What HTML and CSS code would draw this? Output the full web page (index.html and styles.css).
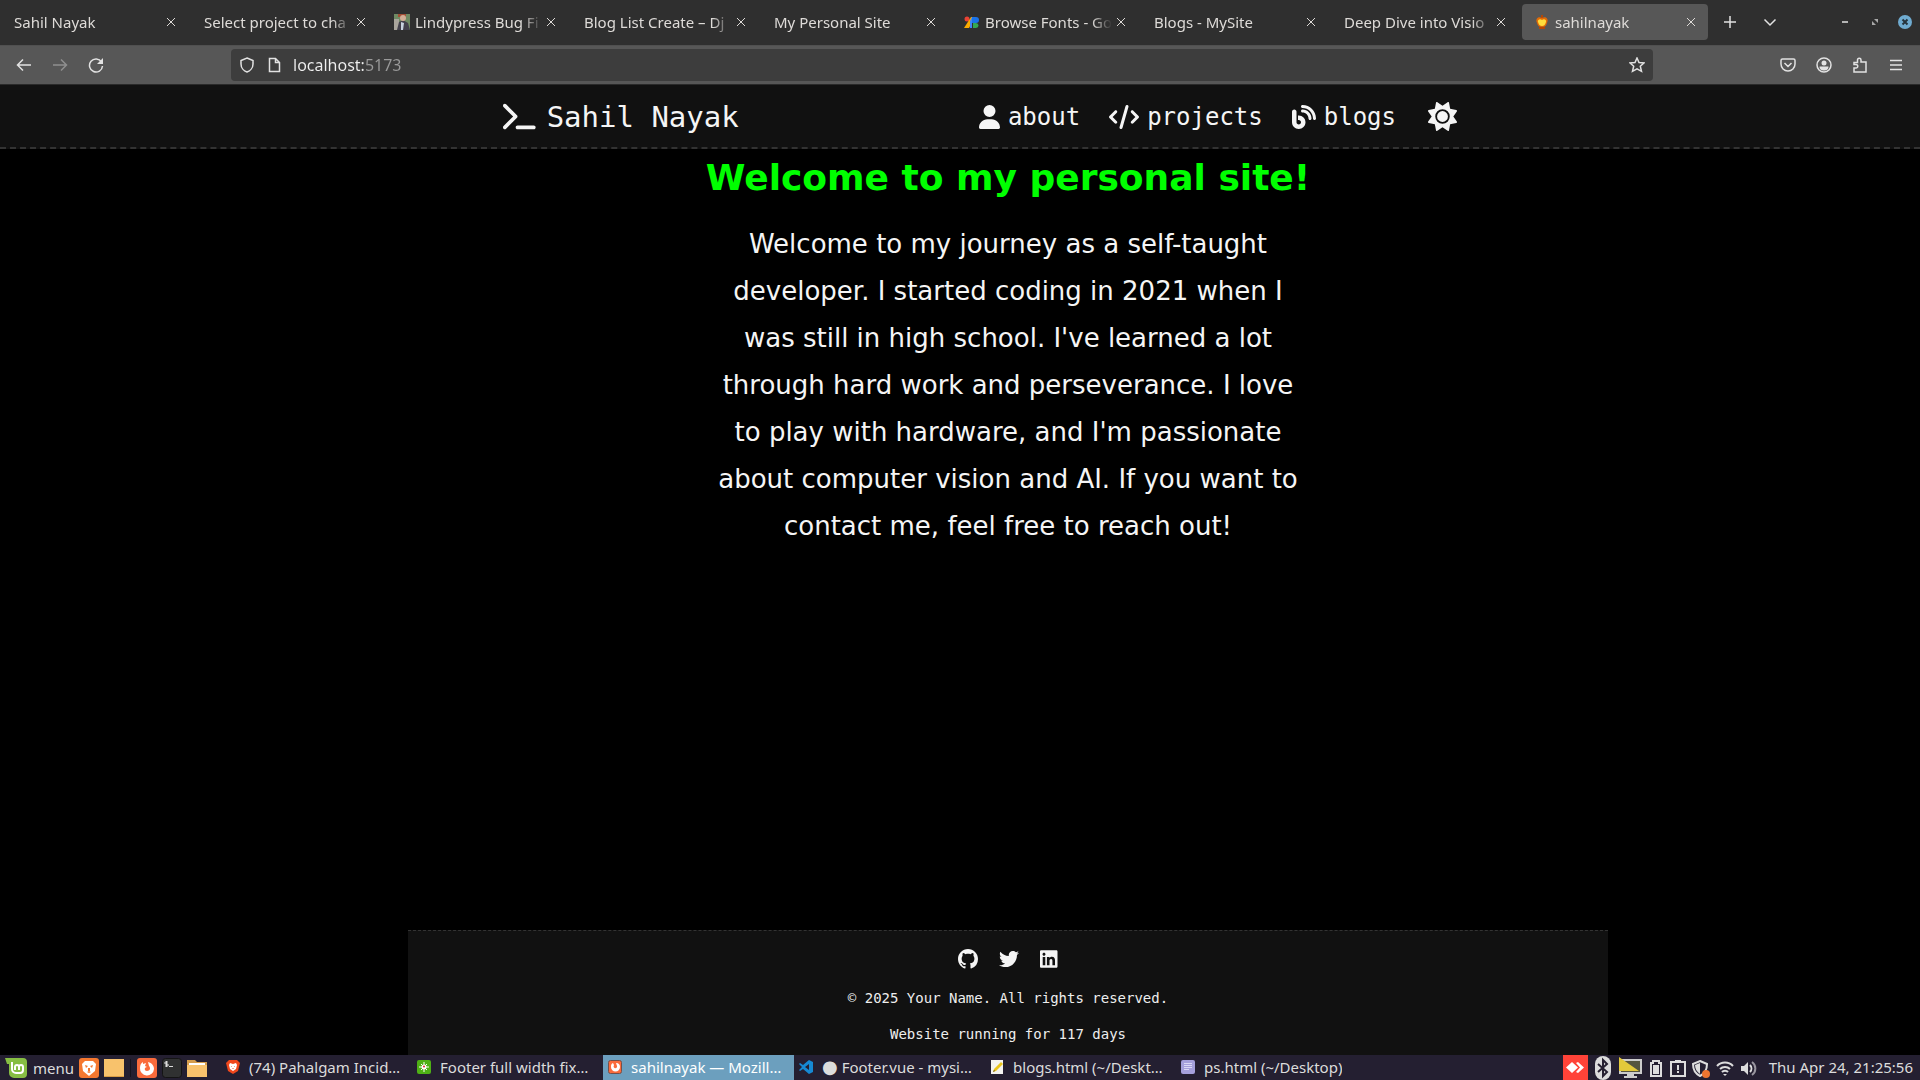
FILE: index.html
```html
<!DOCTYPE html>
<html lang="en">
<head>
<meta charset="utf-8">
<title>sahilnayak</title>
<link rel="stylesheet" href="styles.css">
</head>
<body>
<header class="browser">
  <div class="tabstrip">
    <div class="tabs">
      <div class="tab"><button class="tab-title">Sahil Nayak</button><button class="tab-close" aria-label="Close tab"><svg viewBox="0 0 10 10"><path d="M1 1l8 8M9 1L1 9"/></svg></button></div>
      <div class="tab"><button class="tab-title">Select project to cha</button><button class="tab-close" aria-label="Close tab"><svg viewBox="0 0 10 10"><path d="M1 1l8 8M9 1L1 9"/></svg></button></div>
      <div class="tab"><svg class="favicon" viewBox="0 0 16 16"><path fill="#6f8a63" d="M0 0h16v16H0z"/><path fill="#a24d35" d="M4 0h8v3H4z"/><path fill="#a9a59c" d="M0 5h5v11H0z"/><path fill="#43414c" d="M3 16l2-8 4-2 5 3 2 7z"/><circle cx="9" cy="4" r="3" fill="#d3ae96"/><path fill="#c8d2df" d="M7 8l3 1-1 7H7z"/></svg><button class="tab-title">Lindypress Bug Fi</button><button class="tab-close" aria-label="Close tab"><svg viewBox="0 0 10 10"><path d="M1 1l8 8M9 1L1 9"/></svg></button></div>
      <div class="tab"><button class="tab-title">Blog List Create – Dj</button><button class="tab-close" aria-label="Close tab"><svg viewBox="0 0 10 10"><path d="M1 1l8 8M9 1L1 9"/></svg></button></div>
      <div class="tab"><button class="tab-title">My Personal Site</button><button class="tab-close" aria-label="Close tab"><svg viewBox="0 0 10 10"><path d="M1 1l8 8M9 1L1 9"/></svg></button></div>
      <div class="tab"><svg class="favicon" viewBox="0 0 16 16"><circle cx="3" cy="5" r="2.500" fill="#ea4335"/><path fill="#fbab00" d="M7 3h4L5 14H0z"/><path fill="#1a73e8" d="M8 3h4a3 3 0 010 6H8z"/><path fill="#4285f4" d="M8 3v11H6V7z"/><path fill="#34a853" d="M9 9h3a2.500 2.500 0 010 5H9z"/></svg><button class="tab-title">Browse Fonts - Go</button><button class="tab-close" aria-label="Close tab"><svg viewBox="0 0 10 10"><path d="M1 1l8 8M9 1L1 9"/></svg></button></div>
      <div class="tab"><button class="tab-title">Blogs - MySite</button><button class="tab-close" aria-label="Close tab"><svg viewBox="0 0 10 10"><path d="M1 1l8 8M9 1L1 9"/></svg></button></div>
      <div class="tab"><button class="tab-title">Deep Dive into Visio</button><button class="tab-close" aria-label="Close tab"><svg viewBox="0 0 10 10"><path d="M1 1l8 8M9 1L1 9"/></svg></button></div>
      <div class="tab tab-active"><svg class="favicon" viewBox="0 0 16 16"><path fill="#b34708" d="M7 1h2v4H7zM5 13h6v2H5z"/><path fill="#e06a08" d="M8 4c4-2 7 1 5 5-1 3-2 4-5 4s-4-1-5-4C1 5 4 2 8 4z"/><path fill="#ffdd3c" d="M8 6c2-2 5 0 4 2-1 3-2 4-4 4s-3-1-4-4C3 6 6 4 8 6z"/></svg><button class="tab-title">sahilnayak</button><button class="tab-close" aria-label="Close tab"><svg viewBox="0 0 10 10"><path d="M1 1l8 8M9 1L1 9"/></svg></button></div>
    </div>
    <div class="tab-tools">
      <button class="icon-button" aria-label="New tab"><svg viewBox="0 0 16 16"><path d="M8 2v12M2 8h12"/></svg></button>
      <button class="icon-button" aria-label="List all tabs"><svg viewBox="0 0 16 16"><path d="M2.500 5.500L8 11l5.500-5.500"/></svg></button>
    </div>
    <div class="window-tools">
      <button class="window-button" aria-label="Minimize"><svg viewBox="0 0 14 14"><path fill="#b4b4b4" d="M4 6h6v2H4z"/></svg></button>
      <button class="window-button" aria-label="Restore"><svg viewBox="0 0 14 14"><path fill="#a8a8a8" d="M6 4h4v4zM4 6v4h4z"/></svg></button>
      <button class="window-button" aria-label="Close window"><svg viewBox="0 0 14 14"><circle cx="7" cy="7" r="7" fill="#6fabd0"/><path fill="none" stroke="#26343d" stroke-width="2" d="M4.500 4.500l5 5M9.500 4.500l-5 5"/></svg></button>
    </div>
  </div>
  <div class="toolbar">
    <div class="nav-tools">
      <button class="icon-button" aria-label="Back"><svg viewBox="0 0 16 16"><path d="M15 8H2M7 2.500L1.500 8 7 13.500"/></svg></button>
      <button class="icon-button icon-dim" aria-label="Forward"><svg viewBox="0 0 16 16"><path d="M1 8h13M9 2.500L14.500 8 9 13.500"/></svg></button>
      <button class="icon-button" aria-label="Reload"><svg viewBox="0 0 16 16"><path d="M13.500 5A6.500 6.500 0 1 0 14.500 9"/><path fill="#e2e2e2" stroke="none" d="M15 1v6H9z"/></svg></button>
    </div>
    <form class="address">
      <svg class="line-icon" viewBox="0 0 16 16"><path d="M8 1l6 2.500v3.500c0 4-3 7-6 8-3-1-6-4-6-8V3.500z"/></svg>
      <svg class="line-icon" viewBox="0 0 16 16"><path d="M3.500 1.500h6l4 4v9h-10zM9.500 1.500v4h4"/></svg>
      <input class="address-input" type="text" aria-label="Address" value="localhost:5173">
      <svg class="line-icon" viewBox="0 0 16 16"><path d="M8 1l2 4.500 5 .5-3.700 3.300 1.200 5L8 11.800l-4.500 2.500 1.200-5L1 6l5-.5z"/></svg>
    </form>
    <div class="side-tools">
      <button class="icon-button" aria-label="Save to Pocket"><svg viewBox="0 0 16 16"><path d="M2.500 2h11a1.500 1.500 0 011.500 1.500V7A7 7 0 011 7V3.500A1.500 1.500 0 012.500 2zM4.500 6L8 9.500 11.500 6"/></svg></button>
      <button class="icon-button" aria-label="Account"><svg viewBox="0 0 16 16"><circle cx="8" cy="8" r="7"/><circle cx="8" cy="6" r="2.500" fill="#e2e2e2" stroke="none"/><path fill="#e2e2e2" stroke="none" d="M3.500 9.500h9c0 3-2 4-4.500 4s-4.500-1-4.500-4z"/></svg></button>
      <button class="icon-button" aria-label="Extensions"><svg viewBox="0 0 16 16"><path d="M5.500 5.500V3a1.700 1.700 0 013.500 0v2h5v10H2v-4h2a1.700 1.700 0 000-3.500H2v-2z"/></svg></button>
      <button class="icon-button" aria-label="Menu"><svg viewBox="0 0 16 16"><path d="M2 3.500h12M2 8h12M2 12.500h12"/></svg></button>
    </div>
  </div>
</header>

<div class="page">
  <header class="site-header">
    <nav class="site-nav">
      <a class="brand" href="#"><svg class="icon-brand" viewBox="0 0 576 512"><path d="M9.400 86.600C-3.100 74.100-3.100 53.900 9.400 41.400s32.800-12.500 45.300 0l192 192c12.500 12.500 12.500 32.800 0 45.300l-192 192c-12.500 12.500-32.800 12.500-45.300 0s-12.500-32.800 0-45.300L178.700 256 9.400 86.600zM256 416H544c17.700 0 32 14.300 32 32s-14.300 32-32 32H256c-17.700 0-32-14.300-32-32s14.300-32 32-32z"/></svg>Sahil Nayak</a>
      <div class="site-links">
        <a class="site-link" href="#about"><svg class="icon-link" viewBox="0 0 448 512"><path d="M224 256A128 128 0 1 0 224 0a128 128 0 1 0 0 256zm-45.700 48C79.800 304 0 383.800 0 482.300C0 498.700 13.300 512 29.700 512H418.300c16.400 0 29.700-13.300 29.700-29.700C448 383.800 368.200 304 269.700 304H178.300z"/></svg>about</a>
        <a class="site-link" href="#projects"><svg class="icon-link" viewBox="0 0 640 512"><path d="M392.800 1.200c-17-4.900-34.700 5-39.600 22l-128 448c-4.900 17 5 34.700 22 39.600s34.700-5 39.600-22l128-448c4.900-17-5-34.700-22-39.600zm80.600 120.100c-12.500 12.500-12.500 32.800 0 45.300L562.700 256l-89.400 89.400c-12.500 12.500-12.500 32.800 0 45.300s32.800 12.500 45.300 0l112-112c12.500-12.500 12.500-32.800 0-45.300l-112-112c-12.500-12.500-32.800-12.500-45.300 0zm-306.700 0c-12.500-12.500-32.800-12.500-45.300 0l-112 112c-12.500 12.500-12.500 32.800 0 45.300l112 112c12.500 12.500 32.800 12.500 45.300 0s12.500-32.800 0-45.300L77.300 256l89.400-89.400c12.500-12.500 12.500-32.800 0-45.300z"/></svg>projects</a>
        <a class="site-link" href="#blogs"><svg class="icon-link" viewBox="0 0 512 512"><path d="M192 32c0 17.700 14.300 32 32 32c123.700 0 224 100.300 224 224c0 17.700 14.300 32 32 32s32-14.300 32-32C512 128.900 383.100 0 224 0c-17.700 0-32 14.300-32 32zm0 96c0 17.700 14.300 32 32 32c70.700 0 128 57.300 128 128c0 17.700 14.300 32 32 32s32-14.300 32-32c0-106-86-192-192-192c-17.700 0-32 14.300-32 32zM96 144c0-26.500-21.500-48-48-48S0 117.500 0 144V368c0 79.500 64.500 144 144 144s144-64.500 144-144s-64.500-144-144-144H128v96h16c26.500 0 48 21.500 48 48s-21.500 48-48 48s-48-21.500-48-48V144z"/></svg>blogs</a>
        <button class="theme-toggle" aria-label="Toggle theme"><svg class="icon-brand" viewBox="0 0 512 512"><path d="M361.500 1.200c5 2.100 8.600 6.600 9.600 11.900L391 121l107.900 19.800c5.300 1 9.800 4.600 11.900 9.600s1.500 10.700-1.600 15.200L446.900 256l62.300 90.300c3.100 4.500 3.700 10.200 1.600 15.200s-6.600 8.600-11.900 9.600L391 391 371.100 498.900c-1 5.300-4.600 9.800-9.600 11.900s-10.700 1.500-15.200-1.600L256 446.900l-90.300 62.300c-4.500 3.100-10.200 3.700-15.200 1.600s-8.600-6.600-9.600-11.900L121 391 13.100 371.100c-5.300-1-9.800-4.600-11.900-9.600s-1.500-10.700 1.600-15.200L65.100 256 2.800 165.700c-3.100-4.500-3.700-10.200-1.600-15.200s6.600-8.600 11.900-9.600L121 121 140.900 13.100c1-5.300 4.600-9.800 9.600-11.900s10.700-1.500 15.200 1.600L256 65.100 346.300 2.800c4.500-3.100 10.200-3.700 15.200-1.600zM160 256a96 96 0 1 1 192 0 96 96 0 1 1 -192 0zm224 0a128 128 0 1 0 -256 0 128 128 0 1 0 256 0z"/></svg></button>
      </div>
    </nav>
  </header>
  <main class="intro">
    <h1 class="intro-title">Welcome to my personal site!</h1>
    <p class="intro-text">Welcome to my journey as a self-taught developer. I started coding in 2021 when I was still in high school. I've learned a lot through hard work and perseverance. I love to play with hardware, and I'm passionate about computer vision and AI. If you want to contact me, feel free to reach out!</p>
  </main>
  <div class="footer-row">
  <footer class="site-footer">
    <div class="social">
      <a href="#github" aria-label="GitHub"><svg class="icon-social" viewBox="0 0 16 16"><path d="M8 0C3.580 0 0 3.580 0 8c0 3.540 2.290 6.530 5.470 7.590.4.070.55-.17.55-.38 0-.19-.01-.82-.01-1.490-2.010.37-2.530-.49-2.690-.94-.09-.23-.48-.94-.82-1.130-.28-.15-.68-.52-.01-.53.63-.01 1.080.58 1.230.82.72 1.210 1.870.87 2.330.66.070-.52.28-.87.51-1.070-1.780-.2-3.640-.89-3.640-3.950 0-.87.31-1.590.82-2.150-.08-.2-.36-1.020.08-2.120 0 0 .67-.21 2.200.82.64-.18 1.320-.27 2-.27s1.360.09 2 .27c1.530-1.040 2.200-.82 2.200-.82.44 1.100.16 1.920.08 2.120.51.56.82 1.270.82 2.150 0 3.070-1.870 3.750-3.650 3.950.29.25.54.73.54 1.480 0 1.070-.01 1.930-.01 2.200 0 .21.15.46.55.38A8.010 8.010 0 0 0 16 8c0-4.420-3.580-8-8-8z"/></svg></a>
      <a href="#twitter" aria-label="Twitter"><svg class="icon-social" viewBox="0 0 512 512"><path d="M459.370 151.716c.325 4.548.325 9.097.325 13.645 0 138.720-105.583 298.558-298.558 298.558-59.452 0-114.680-17.219-161.137-47.106 8.447.974 16.568 1.299 25.340 1.299 49.055 0 94.213-16.568 130.274-44.832-46.132-.975-84.792-31.188-98.112-72.772 6.498.974 12.995 1.624 19.818 1.624 9.421 0 18.843-1.300 27.614-3.573-48.081-9.747-84.143-51.980-84.143-102.985v-1.299c13.969 7.797 30.214 12.670 47.431 13.319-28.264-18.843-46.781-51.005-46.781-87.391 0-19.492 5.197-37.360 14.294-52.954 51.655 63.675 129.300 105.258 216.365 109.807-1.624-7.797-2.599-15.918-2.599-24.040 0-57.828 46.782-104.934 104.934-104.934 30.213 0 57.502 12.670 76.670 33.137 23.715-4.548 46.456-13.320 66.599-25.340-7.798 24.366-24.366 44.833-46.132 57.827 21.117-2.273 41.584-8.122 60.426-16.243-14.292 20.791-32.161 39.308-52.628 54.253z"/></svg></a>
      <a href="#linkedin" aria-label="LinkedIn"><svg class="icon-social" viewBox="0 0 448 512"><path d="M416 32H31.900C14.300 32 0 46.500 0 64.300v383.400C0 465.500 14.300 480 31.900 480H416c17.600 0 32-14.500 32-32.300V64.300c0-17.800-14.400-32.300-32-32.300zM135.400 416H69V202.200h66.500V416zm-33.200-243c-21.300 0-38.500-17.300-38.500-38.500S80.900 96 102.200 96c21.200 0 38.500 17.300 38.500 38.500 0 21.300-17.200 38.500-38.500 38.500zm282.100 243h-66.400V312c0-24.800-.5-56.700-34.500-56.700-34.600 0-39.900 27-39.900 54.900V416h-66.400V202.200h63.700v29.200h.9c8.900-16.800 30.600-34.500 62.900-34.500 67.200 0 79.700 44.300 79.700 101.900V416z"/></svg></a>
    </div>
    <p class="footer-text">© 2025 Your Name. All rights reserved.</p>
    <p class="footer-text">Website running for 117 days</p>
  </footer>
  </div>
</div>

<div class="taskbar">
  <div class="launchers">
    <button class="start"><svg class="icon-start" viewBox="0 0 22 20"><path fill="#86be43" d="M0 0h18a4 4 0 014 4v12a4 4 0 01-4 4h-9a5 5 0 01-5-5V6H2z"/><path fill="none" stroke="#fff" stroke-width="2" d="M7 4v7a4 4 0 004 4h4a3 3 0 003-3V9a2 2 0 00-4 0v3M14 9a2 2 0 00-4 0v3"/></svg>menu</button>
    <button class="launcher" aria-label="Brave"><svg viewBox="0 0 20 20"><rect width="20" height="20" rx="3" fill="#f5782f"/><path fill="#fff" d="M6 3h8l3 3-1 7-6 5-6-5-1-7z"/><path fill="#f5782f" d="M6 7l3 1-2 2zm8 0l-3 1 2 2zM9 10h2v3H9zM8 14l2-1 2 1-2 1z"/></svg></button>
    <button class="launcher" aria-label="Desktop"><svg viewBox="0 0 20 20"><path fill="#f8c26c" d="M0 1h20v18H0z"/><path fill="#d99c45" d="M0 18h20v1H0z"/></svg></button>
    <span class="divider"></span>
    <button class="launcher" aria-label="Firefox"><svg viewBox="0 0 20 20"><rect width="20" height="20" rx="3" fill="#fa6b3c"/><path fill="#fff" d="M3 10c0-3 1-5 3-6v2l3-1-1 3 2 1c-3 0-3 4 0 4s4-3 2-5l-1-4c4 1 6 4 6 7a7 7 0 01-14-1z"/></svg></button>
    <button class="launcher" aria-label="Terminal"><svg viewBox="0 0 20 20"><rect x=".5" y=".5" width="19" height="19" rx="3" fill="#303131" stroke="#141414"/><path fill="none" stroke="#ddd" d="M6 4H3v2h3v2H3M4.500 3v6M7 8.500h4"/></svg></button>
    <button class="launcher" aria-label="Files"><svg viewBox="0 0 20 20"><path fill="#d49c4c" d="M0 2h8l2 2h10v8H0z"/><path fill="#fff" d="M2 5h16v3H2z"/><path fill="#f8c26c" d="M0 7h20v12H0z"/></svg></button>
  </div>
  <div class="tasks">
    <button class="task"><svg class="task-icon" viewBox="0 0 14 14"><path fill="#f0471c" d="M3 0h8l3 3-2 8-5 3-5-3-2-8z"/><path fill="#fff" d="M4 3l3 1 3-1 1 2-1 4-3 2-3-2-1-4z"/><path fill="#f0471c" d="M5 6h1v1zm3 0h1L8 7zM6 8h2L7 9z"/></svg><span class="task-label">(74) Pahalgam Incid…</span></button>
    <button class="task"><svg class="task-icon" viewBox="0 0 14 14"><rect width="14" height="14" rx="2" fill="#4eb015"/><path stroke="#fff" d="M7 2v10M2 7h10M4 4l6 6M10 4l-6 6"/><circle cx="7" cy="7" r="2.500" fill="#fff"/><circle cx="7" cy="6.500" r="1" fill="#d22"/></svg><span class="task-label">Footer full width fix…</span></button>
    <button class="task task-active"><svg class="task-icon" viewBox="0 0 14 14"><rect x=".5" y=".5" width="13" height="13" rx="2" fill="#fa6b3c" stroke="#74504a"/><path fill="#fff" d="M3 7c0-2 0-3 2-4l1 2c-2 4 4 4 3 1L8 3c3 0 4 2 4 4a4.500 4.500 0 01-9 0z"/></svg><span class="task-label">sahilnayak — Mozill…</span></button>
    <button class="task"><svg class="task-icon" viewBox="0 0 14 14"><path fill="#1689d3" d="M10 0l4 2v10l-4 2-6-5-3 2-1-1 3-3-3-3 1-1 3 2zm0 4L6 7l4 3z"/></svg><span class="task-label"><span class="unsaved">●</span> Footer.vue - mysi…</span></button>
    <button class="task"><svg class="task-icon" viewBox="0 0 14 14"><path fill="#f4f4f0" d="M1 0h12v14H1z"/><path fill="#eac51c" d="M11 2l2 2-7 7-3 1 1-3z"/><path fill="#55451c" d="M4 10l1 1-2 1z"/></svg><span class="task-label">blogs.html (~/Deskt…</span></button>
    <button class="task"><svg class="task-icon" viewBox="0 0 14 14"><rect width="14" height="14" rx="2" fill="#a5a0db"/><path stroke="#dad8f5" d="M3 3.500h8M3 5.500h8M3 7.500h8M3 9.500h5"/></svg><span class="task-label">ps.html (~/Desktop)</span></button>
  </div>
  <div class="tray">
    <button class="tray-red" aria-label="AnyDesk"><svg viewBox="0 0 25 25"><path fill="#fff" d="M3 12.500L9 7l6 5.500L9 18zM13 8l2-1 6 5.500-6 5.500-2-1 4-4.500z"/></svg></button>
    <svg class="tray-icon" viewBox="0 0 18 24"><rect x="1" width="16" height="24" rx="8" fill="#dcdcdc"/><path fill="none" stroke="#262031" stroke-width="2" d="M4 8l9 8-4 4V4l4 4-9 8"/></svg>
    <svg class="tray-icon" viewBox="0 0 24 24"><path fill="#ccc" d="M1 3h23v15H1zM9 18h7v2h3v2H6v-2h3z"/><path fill="#55543f" d="M3 5h19v11H3z"/><path fill="#e3c93b" d="M1 1v14h20zM5 9v3h4z"/></svg>
    <svg class="tray-icon" viewBox="0 0 16 24"><path fill="none" stroke="#ddd" stroke-width="2" d="M3 7h2V5h6v2h2v13H3z"/><path fill="#ddd" d="M5 9h6v9H5z"/></svg>
    <svg class="tray-icon" viewBox="0 0 16 24"><path fill="none" stroke="#ddd" stroke-width="2" d="M1 6h14v14H1zM5 5h6M8 9v5M8 15v2"/></svg>
    <svg class="tray-icon" viewBox="0 0 18 24"><path fill="none" stroke="#ddd" stroke-width="2" d="M8 5l7 3c0 6-3 10-7 12-4-2-7-6-7-12z"/><path fill="#ddd" d="M8 7v11c-3-2-5-5-5-9z"/><circle cx="14" cy="18" r="4" fill="#ee7530"/></svg>
    <svg class="tray-icon" viewBox="0 0 18 24"><path fill="none" stroke="#ddd" stroke-width="2" d="M1 10a11 11 0 0116 0M4 13a7 7 0 0110 0M6 16a4 4 0 016 0"/><path fill="#ddd" d="M7 18h4l-2 2z"/></svg>
    <svg class="tray-icon" viewBox="0 0 18 24"><path fill="#ddd" d="M1 10h3l4-4v13l-4-4H1z"/><path fill="none" stroke="#ddd" stroke-width="2" d="M10 9a5 5 0 010 7"/><path fill="none" stroke="#99969f" stroke-width="2" d="M12 6a8 8 0 010 13"/></svg>
    <time class="clock">Thu Apr 24, 21:25:56</time>
  </div>
</div>
</body>
</html>
```
FILE: styles.css
```css
* { box-sizing: border-box; }

body {
  margin: 0;
  min-height: 100vh;
  display: flex;
  flex-direction: column;
  background: #000;
  color: #f5f5f5;
  font-family: "Noto Sans", sans-serif;
  font-size: 15px;
}

button, input {
  padding: 0;
  border: 0;
  background: none;
  color: inherit;
  font: inherit;
}

svg { display: block; flex: none; }
a { color: inherit; text-decoration: none; }

/* Browser window */
.browser { color: #dedbd8; }

.tabstrip {
  display: flex;
  align-items: center;
  height: 45px;
  padding: 0 8px 2px 2px;
  background: #2f2f2f;
}

.tabs { display: flex; flex: 0 1 1706px; gap: 4px; min-width: 0; }

.tab {
  display: flex;
  flex: 1 1 0;
  align-items: center;
  min-width: 0;
  height: 36px;
  padding: 0 8px 0 12px;
  border-radius: 4px;
}

.tab-active { background: #575757; }
.favicon { width: 16px; height: 16px; margin-right: 5px; }

.tab-title {
  flex: 1;
  min-width: 0;
  overflow: hidden;
  white-space: nowrap;
  text-align: left;
  mask-image: linear-gradient(to left, transparent, #000 20px);
}

.tab-close { padding: 4px; }
.tab-close svg { width: 10px; height: 10px; fill: none; stroke: #dedbd8; }

.tab-tools { display: flex; gap: 24px; padding-left: 14px; }
.window-tools { display: flex; gap: 16px; margin-left: auto; }
.window-button svg { width: 14px; height: 14px; }

.icon-button svg, .line-icon {
  width: 16px;
  height: 16px;
  fill: none;
  stroke: #e2e2e2;
  stroke-width: 1.5;
}

.icon-dim { opacity: .4; }

.toolbar {
  display: flex;
  align-items: center;
  height: 40px;
  padding: 0 16px;
  background: #575757;
  border-top: 1px solid #505050;
  border-bottom: 1px solid #2a2a2a;
}

.nav-tools, .side-tools { display: flex; gap: 20px; }
.nav-tools { flex: 0 1 215px; }
.side-tools { flex: 0 1 251px; justify-content: flex-end; }

.address {
  display: flex;
  flex: 1;
  align-items: center;
  gap: 11px;
  height: 32px;
  padding: 0 8px;
  border-radius: 4px;
  background: #3d3d3d;
}

.address-input {
  flex: 1;
  height: 32px;
  font-size: 16px;
  color: transparent;
  background: linear-gradient(to right, #f0f0f0 71px, #9a9a9a 71px);
  background-clip: text;
}

/* Site */
.page { display: flex; flex: 1; flex-direction: column; }

.site-header {
  padding-left: 40px;
  background: #111;
  border-bottom: 2px dashed #333;
}

.site-nav {
  display: flex;
  align-items: center;
  justify-content: space-between;
  width: 954px;
  max-width: 100%;
  height: 62px;
  margin: 0 auto;
  padding-top: 1px;
  font-family: "DejaVu Sans Mono", monospace;
  font-size: 24px;
}

.brand { display: flex; align-items: center; gap: 11px; font-size: 29px; }
.site-links { display: flex; align-items: center; gap: 29px; }
.site-link { display: flex; align-items: center; gap: 8px; }
.icon-link { height: 24px; fill: currentColor; }
.icon-brand { height: 29px; fill: currentColor; }
.theme-toggle { padding-left: 3px; }

.intro {
  flex: 1;
  padding: 8px 0 24px 96px;
  text-align: center;
  font-family: "DejaVu Sans", sans-serif;
}

.intro-title {
  margin: 0;
  color: #0f0;
  font-size: 36px;
  line-height: 42px;
}

.intro-text {
  max-width: 600px;
  margin: 22px auto 0;
  font-size: 26px;
  line-height: 47px;
}

.footer-row { padding-left: 96px; }

.site-footer {
  max-width: 1200px;
  margin: 0 auto;
  padding: 18px 20px 12px;
  background: #111;
  border-top: 1px dashed #333;
  color: #eee;
  font-family: "DejaVu Sans Mono", monospace;
  font-size: 14px;
  text-align: center;
}

.social { display: flex; justify-content: center; gap: 21px; margin-bottom: 20px; }
.icon-social { height: 20px; fill: #f5f5f5; }
.footer-text { margin: 0; line-height: 18px; }
.footer-text + .footer-text { margin-top: 18px; }

/* Desktop panel */
.taskbar {
  display: flex;
  height: 25px;
  background: #241f31;
  color: #dcdcdc;
  line-height: 22px;
}

.launchers { display: flex; align-items: center; gap: 5px; padding-left: 5px; }
.start { display: flex; align-items: center; gap: 6px; }
.icon-start { width: 22px; height: 20px; }
.launcher svg { width: 20px; height: 20px; }
.divider { width: 1px; height: 18px; background: #15121d; margin: 0 1px; }

.tasks { display: flex; flex: 1; min-width: 0; padding-left: 14px; }

.task {
  display: flex;
  flex: 0 1 191px;
  align-items: center;
  gap: 9px;
  min-width: 0;
  padding: 0 4px 2px 5px;
}

.task-active { background: #6c9fbe; color: #fff; }
.task-icon { width: 14px; height: 14px; }

.task-label {
  overflow: hidden;
  white-space: nowrap;
  text-overflow: ellipsis;
}

.unsaved { font-family: "DejaVu Sans", sans-serif; font-size: 18px; line-height: 1; }

.tray { display: flex; align-items: center; gap: 6px; padding-right: 7px; }
.tray-red { background: #ff4338; }
.tray-red svg { width: 25px; height: 25px; }
.tray-icon { height: 24px; }
.clock { padding: 0 0 2px 5px; white-space: nowrap; }
```
